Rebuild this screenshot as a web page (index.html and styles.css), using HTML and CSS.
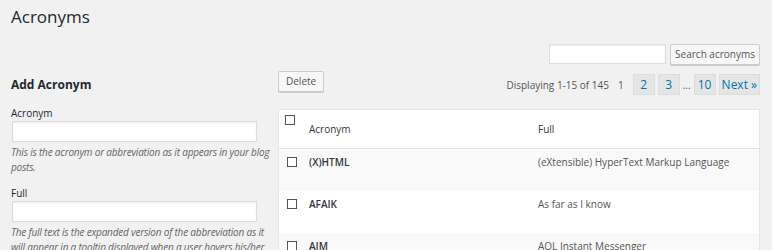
FILE: index.html
```html
<!DOCTYPE html>
<html lang="en">
<head>
    <meta charset="UTF-8">
    <title>Acronyms</title>
    <link rel="stylesheet" href="styles.css">
</head>
<body>
    <div class="wrap">
        <h1>Acronyms</h1>

        <div class="search-box">
            <input type="search" class="search-input">
            <button class="button search-button">Search acronyms</button>
        </div>

        <div class="columns">
            <div class="col-left">
                <h2>Add Acronym</h2>
                <div class="form-field">
                    <label for="acronym">Acronym</label>
                    <input type="text" id="acronym">
                    <p class="description">This is the acronym or abbreviation as it appears in your blog posts.</p>
                </div>
                <div class="form-field">
                    <label for="full">Full</label>
                    <input type="text" id="full">
                    <p class="description">The full text is the expanded version of the abbreviation as it will appear in a tooltip displayed when a user hovers his/her mouse over the acronym.</p>
                </div>
            </div>

            <div class="col-right">
                <div class="tablenav">
                    <button class="button">Delete</button>
                    <div class="pagination">
                        <span class="displaying">Displaying 1-15 of 145</span>
                        <span class="current">1</span>
                        <a class="page" href="#">2</a>
                        <a class="page" href="#">3</a>
                        <span class="dots">...</span>
                        <a class="page" href="#">10</a>
                        <a class="page" href="#">Next &raquo;</a>
                    </div>
                </div>

                <table class="list">
                    <thead>
                        <tr>
                            <th class="check"><input type="checkbox"></th>
                            <th class="col-acronym">Acronym</th>
                            <th>Full</th>
                        </tr>
                    </thead>
                    <tbody>
                        <tr>
                            <td class="check"><input type="checkbox"></td>
                            <td class="title">(X)HTML</td>
                            <td>(eXtensible) HyperText Markup Language</td>
                        </tr>
                        <tr>
                            <td class="check"><input type="checkbox"></td>
                            <td class="title">AFAIK</td>
                            <td>As far as I know</td>
                        </tr>
                        <tr>
                            <td class="check"><input type="checkbox"></td>
                            <td class="title">AIM</td>
                            <td>AOL Instant Messenger</td>
                        </tr>
                    </tbody>
                </table>
            </div>
        </div>
    </div>
</body>
</html>
```

FILE: styles.css
```css
body {
    margin: 0;
    background: #f1f1f1;
    color: #444;
    font-family: "Open Sans", sans-serif;
    font-size: 10px;
    line-height: 16px;
}
.wrap {
    width: 749px;
    margin-left: 11px;
}
h1 {
    margin: 0;
    padding-top: 4px;
    font-size: 17px;
    font-weight: 400;
    line-height: 26px;
    color: #23282d;
}
.search-box {
    display: flex;
    justify-content: flex-end;
    gap: 4px;
    margin-top: 14px;
    height: 21px;
}
.search-input {
    box-sizing: border-box;
    width: 117px;
    height: 20px;
    margin: 0;
    border: 1px solid #ddd;
    background: #fff;
    box-shadow: inset 0 1px 2px rgba(0,0,0,.07);
}
.button {
    box-sizing: border-box;
    height: 21px;
    margin: 0;
    padding: 0 7px;
    border: 1px solid #ccc;
    border-radius: 2px;
    background: #f7f7f7;
    box-shadow: 0 1px 0 #ccc;
    color: #555;
    font-family: "Open Sans", sans-serif;
    font-size: 10px;
    line-height: 19px;
}
.search-button {
    padding: 0 4px;
}
.columns {
    display: grid;
    grid-template-columns: 267px 1fr;
}
.col-left h2 {
    margin: 12px 0 0;
    font-size: 12px;
    font-weight: 700;
    line-height: 16px;
    color: #23282d;
}
.form-field {
    margin-top: 12px;
}
.form-field + .form-field {
    margin-top: 10px;
}
.form-field label {
    display: block;
    color: #23282d;
    line-height: 16px;
}
.form-field input {
    box-sizing: border-box;
    display: block;
    width: 245px;
    height: 21px;
    margin: 0 0 0 1px;
    border: 1px solid #ddd;
    background: #fff;
    box-shadow: inset 0 1px 2px rgba(0,0,0,.07);
}
.description {
    margin: 3px 0 0;
    width: 262px;
    color: #666;
    font-style: italic;
    line-height: 15px;
    letter-spacing: -0.2px;
}
.tablenav {
    display: flex;
    justify-content: space-between;
    align-items: flex-start;
    margin-top: 6px;
    height: 38px;
}
.pagination {
    display: flex;
    align-items: center;
    gap: 3px;
    margin-top: 3px;
}
.displaying {
    color: #555;
}
.current {
    margin: 0 6px;
    color: #555;
}
.page {
    box-sizing: border-box;
    min-width: 22px;
    height: 21px;
    padding: 0 2px;
    border: 1px solid #ddd;
    background: #e5e5e5;
    color: #0073aa;
    font-size: 12px;
    line-height: 19px;
    text-align: center;
    text-decoration: none;
}
.dots {
    color: #555;
}
.list {
    width: 482px;
    border: 1px solid #e5e5e5;
    border-spacing: 0;
    background: #fff;
    box-shadow: 0 1px 1px rgba(0,0,0,.04);
}
.list th {
    padding: 10px;
    border-bottom: 1px solid #e1e1e1;
    color: #32373c;
    font-weight: 400;
    line-height: 18px;
    text-align: left;
}
.list th.check {
    width: 14px;
    padding: 5px 0 0 6px;
    vertical-align: top;
}
.list th.col-acronym {
    width: 209px;
}
.list td {
    padding: 4px 10px 20px;
    color: #555;
    line-height: 18px;
    vertical-align: top;
}
.list td.check {
    padding: 8px 0 0 8px;
}
.list td.title {
    color: #32373c;
    font-weight: 600;
}
.list tbody tr:nth-child(odd) {
    background: #f9f9f9;
}
input[type="checkbox"] {
    appearance: none;
    display: block;
    width: 10px;
    height: 10px;
    margin: 0;
    border: 1px solid #555;
    background: #fff;
}
```
